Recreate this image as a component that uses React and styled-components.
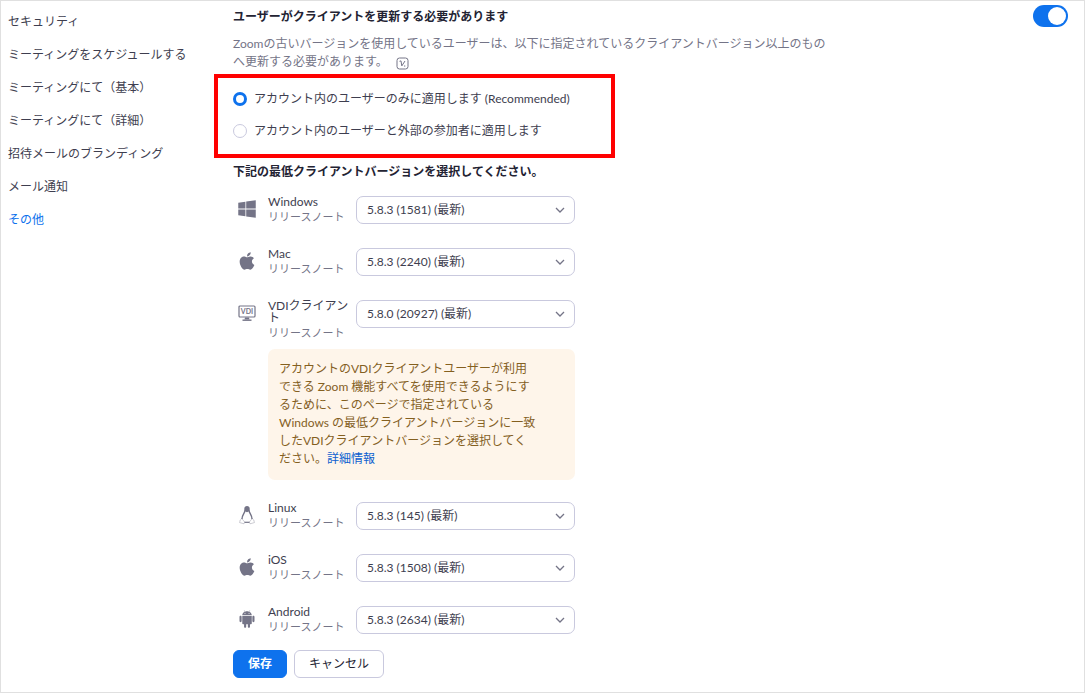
import React, { useState } from "react"
import styled, { createGlobalStyle } from "styled-components"
import { FaApple, FaWindows } from "react-icons/fa"
import { AiFillAndroid } from "react-icons/ai"

const colors = {
  text: "#232333",
  body: "#3e3e4f",
  muted: "#747487",
  blue: "#0e72ed",
  line: "#c9c9de",
  mark: "#ff0000",
}

const navItems = [
  "セキュリティ",
  "ミーティングをスケジュールする",
  "ミーティングにて（基本）",
  "ミーティングにて（詳細）",
  "招待メールのブランディング",
  "メール通知",
  "その他",
]

const VdiIcon = () => (
  <svg width="18" height="17" viewBox="0 0 18 17" fill="none" stroke="currentColor">
    <rect x="1" y="1" width="16" height="11" rx="1" strokeWidth="1.2" />
    <path d="M7 12.5h4l.5 2h-5z" fill="currentColor" stroke="none" />
    <path d="M4.5 15.2h9" strokeWidth="1.4" />
    <text x="9" y="9" textAnchor="middle" fontSize="7" fontWeight="700" fill="currentColor" stroke="none">
      VDI
    </text>
  </svg>
)

const LinuxIcon = () => (
  <svg width="18" height="20" viewBox="0 0 18 20" fill="none" stroke="currentColor">
    <path d="M6.3 6V3.800C6.300 2 7.400 1 9 1s2.700 1 2.700 2.800V6L9 7.200z" fill="currentColor" stroke="none" />
    <path d="M6.900 5.500C6.900 8.300 3.900 10 4 14M11.100 5.500c0 2.800 3 4.500 2.900 8.500" strokeWidth="1.400" />
    <path d="M6.500 17.300h5" strokeWidth="1.200" />
    <path
      d="M3.800 13.600l3 3.600-.8 1.600-4.400-1.200.6-2.600zM14.200 13.600l-3 3.600.8 1.600 4.400-1.200-.6-2.600z"
      strokeWidth=".8"
      opacity=".45"
    />
  </svg>
)

const ChevronIcon = () => (
  <svg width="10" height="6" viewBox="0 0 10 6" fill="none" stroke="currentColor" strokeWidth="1.3">
    <path d="M1 1l4 4 4-4" />
  </svg>
)

const ModifiedIcon = () => (
  <svg width="13" height="13" viewBox="0 0 13 13" fill="none" stroke="currentColor">
    <rect x="1" y="1" width="11" height="11" rx="2.5" />
    <path d="M3.5 4.300l1.500-.4.800 5L9 4M8 9h1.300" />
  </svg>
)

const platforms = [
  { id: "windows", name: "Windows", icon: <FaWindows size={20} />, version: "5.8.3 (1581) (最新)" },
  { id: "mac", name: "Mac", icon: <FaApple size={20} />, version: "5.8.3 (2240) (最新)" },
  { id: "vdi", name: "VDIクライアント", icon: <VdiIcon />, version: "5.8.0 (20927) (最新)", notice: true },
  { id: "linux", name: "Linux", icon: <LinuxIcon />, version: "5.8.3 (145) (最新)" },
  { id: "ios", name: "iOS", icon: <FaApple size={20} />, version: "5.8.3 (1508) (最新)" },
  { id: "android", name: "Android", icon: <AiFillAndroid size={20} />, version: "5.8.3 (2634) (最新)" },
]

const Platform = ({ platform }) => (
  <PlatformRow>
    <PlatformIcon>{platform.icon}</PlatformIcon>
    <div>
      <PlatformName htmlFor={platform.id}>{platform.name}</PlatformName>
      <ReleaseLink href="#release">リリースノート</ReleaseLink>
    </div>
    <SelectBox>
      <Select id={platform.id}>
        <option>{platform.version}</option>
      </Select>
      <ChevronIcon />
    </SelectBox>
    {platform.notice && (
      <Notice>
        アカウントのVDIクライアントユーザーが利用できる Zoom
        機能すべてを使用できるようにするために、このページで指定されている Windows
        の最低クライアントバージョンに一致したVDIクライアントバージョンを選択してください。
        <a href="#details">詳細情報</a>
      </Notice>
    )}
  </PlatformRow>
)

const App = () => {
  const [enabled, setEnabled] = useState(true)
  const [scope, setScope] = useState("users")

  return (
    <>
      <GlobalStyle />
      <Page>
        <Nav>
          {navItems.map(item => (
            <NavLink key={item} href="#settings" $active={item === "その他"}>
              {item}
            </NavLink>
          ))}
        </Nav>
        <Main>
          <Header>
            <div>
              <Title>ユーザーがクライアントを更新する必要があります</Title>
              <Description>
                Zoomの古いバージョンを使用しているユーザーは、以下に指定されているクライアントバージョン以上のものへ更新する必要があります。
                <ModifiedIcon />
              </Description>
            </div>
            <Toggle
              type="checkbox"
              role="switch"
              aria-label="ユーザーがクライアントを更新する必要があります"
              checked={enabled}
              onChange={e => setEnabled(e.target.checked)}
            />
          </Header>
          <ScopeGroup>
            <RadioLabel>
              <Radio name="scope" checked={scope === "users"} onChange={() => setScope("users")} />
              アカウント内のユーザーのみに適用します (Recommended)
            </RadioLabel>
            <RadioLabel>
              <Radio name="scope" checked={scope === "all"} onChange={() => setScope("all")} />
              アカウント内のユーザーと外部の参加者に適用します
            </RadioLabel>
          </ScopeGroup>
          <Title as="h3">下記の最低クライアントバージョンを選択してください。</Title>
          <PlatformList>
            {platforms.map(platform => (
              <Platform key={platform.id} platform={platform} />
            ))}
          </PlatformList>
          <Actions>
            <Button $primary>保存</Button>
            <Button>キャンセル</Button>
          </Actions>
        </Main>
      </Page>
    </>
  )
}

export default App

const GlobalStyle = createGlobalStyle`
  * {
    box-sizing: border-box;
  }
  body {
    margin: 0;
    background: #ffffff;
    color: ${colors.body};
    font-family: Lato, "Noto Sans CJK JP", sans-serif;
    font-size: 12px;
    line-height: 18px;
  }
  a {
    color: ${colors.blue};
    text-decoration: none;
  }
`

const Page = styled.div`
  display: flex;
  min-height: 100vh;
  border: 1px solid #e0e0e0;
`

const Nav = styled.nav`
  display: flex;
  flex-direction: column;
  flex: 0 0 232px;
  gap: 15px;
  padding: 12px 8px 0 7px;
`

const NavLink = styled.a`
  color: ${props => (props.$active ? colors.blue : colors.body)};
`

const Main = styled.main`
  flex: 1;
  min-width: 0;
  padding: 6px 16px 14px 0;
`

const Header = styled.header`
  display: flex;
  justify-content: space-between;
  align-items: flex-start;
`

const Title = styled.h2`
  margin: 0;
  color: ${colors.text};
  font-size: 12px;
  font-weight: 700;
  line-height: 20px;
`

const Description = styled.p`
  max-width: 600px;
  margin: 8px 0 0;
  color: ${colors.muted};

  svg {
    margin-left: 8px;
    vertical-align: -4px;
  }
`

const Toggle = styled.input`
  appearance: none;
  display: flex;
  justify-content: ${props => (props.checked ? "flex-end" : "flex-start")};
  width: 35px;
  height: 22px;
  margin: -2px 0 0;
  padding: 2px;
  border-radius: 11px;
  background: ${props => (props.checked ? colors.blue : colors.muted)};

  &::before {
    content: "";
    width: 18px;
    height: 18px;
    border-radius: 50%;
    background: #ffffff;
  }
`

const ScopeGroup = styled.fieldset`
  display: flex;
  flex-direction: column;
  gap: 14px;
  width: 401px;
  margin: 3px 0 4px -19px;
  padding: 12px 15px 14px;
  border: 4px solid ${colors.mark};
`

const RadioLabel = styled.label`
  display: flex;
  align-items: center;
  gap: 7px;
`

const Radio = styled.input.attrs({ type: "radio" })`
  appearance: none;
  width: 14px;
  height: 14px;
  margin: 0;
  border: ${props => (props.checked ? `3px solid ${colors.blue}` : `1px solid ${colors.line}`)};
  border-radius: 50%;
  background: #ffffff;
`

const PlatformList = styled.div`
  display: flex;
  flex-direction: column;
  gap: 22px;
  margin-top: 14px;
`

const PlatformRow = styled.div`
  display: grid;
  grid-template-columns: 35px 88px 219px;
  row-gap: 7px;
  align-items: start;
`

const PlatformIcon = styled.span`
  display: flex;
  justify-content: center;
  align-items: center;
  width: 28px;
  height: 26px;
  color: ${colors.muted};
`

const PlatformName = styled.label`
  display: block;
  width: 84px;
  line-height: 12px;
`

const ReleaseLink = styled.a`
  display: block;
  color: ${colors.muted};
  font-size: 11px;
`

const SelectBox = styled.div`
  position: relative;
  color: ${colors.muted};

  svg {
    position: absolute;
    top: 11px;
    right: 10px;
    pointer-events: none;
  }
`

const Select = styled.select`
  appearance: none;
  display: block;
  width: 100%;
  height: 28px;
  padding: 0 28px 0 10px;
  border: 1px solid ${colors.line};
  border-radius: 7px;
  background: #ffffff;
  color: ${colors.body};
  font: inherit;
`

const Notice = styled.div`
  grid-column: 2 / -1;
  padding: 11px 37px 12px 11px;
  border-radius: 7px;
  background: #fef5ea;
  color: #84601f;

  a {
    color: #0b5fd0;
  }
`

const Actions = styled.div`
  display: flex;
  gap: 7px;
  margin-top: 14px;
`

const Button = styled.button`
  height: 28px;
  padding: 0 14px;
  border: 1px solid ${props => (props.$primary ? colors.blue : colors.line)};
  border-radius: 6px;
  background: ${props => (props.$primary ? colors.blue : "#ffffff")};
  color: ${props => (props.$primary ? "#ffffff" : colors.text)};
  font: inherit;
  font-weight: ${props => (props.$primary ? 700 : 400)};
`
